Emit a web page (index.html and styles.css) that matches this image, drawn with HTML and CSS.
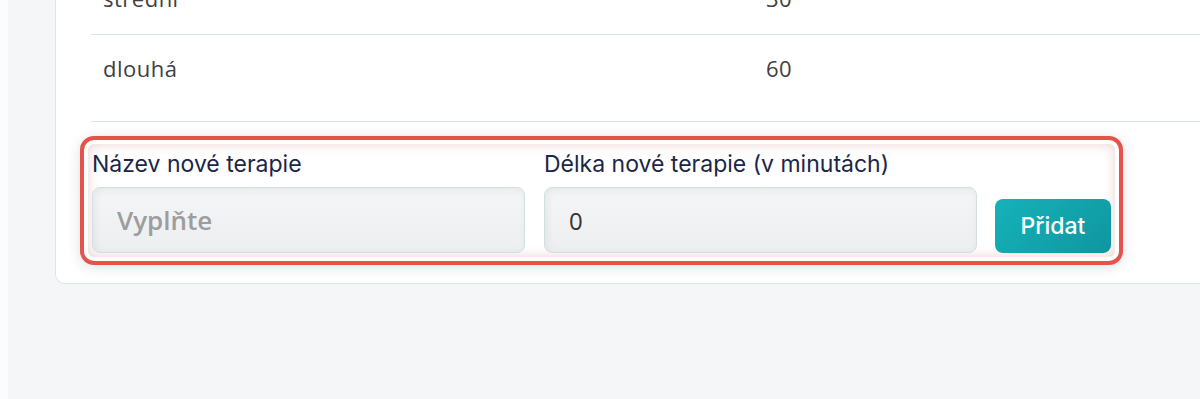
FILE: index.html
```html
<!DOCTYPE html>
<html lang="cs">
<head>
  <meta charset="UTF-8">
  <meta name="viewport" content="width=device-width, initial-scale=1.0">
  <link rel="stylesheet" href="styles.css">
</head>
<body>

  <div class="layout">
    <div class="sidebar-edge"></div>

    <main class="content">
      <div class="card">
        <table class="therapy-table">
          <tbody>
            <tr class="row-first">
              <td class="col-name">střední</td>
              <td>30</td>
            </tr>
            <tr>
              <td class="col-name">dlouhá</td>
              <td>60</td>
            </tr>
          </tbody>
        </table>

        <div class="highlight">
          <form class="new-therapy" onsubmit="return false">
            <div class="field">
              <label for="therapyName">Název nové terapie</label>
              <input id="therapyName" type="text" placeholder="Vyplňte">
            </div>
            <div class="field">
              <label for="therapyLength">Délka nové terapie (v minutách)</label>
              <input id="therapyLength" type="text" value="0">
            </div>
            <button class="btn-add" type="submit">Přidat</button>
          </form>
        </div>
      </div>
    </main>
  </div>

</body>
</html>
```

FILE: styles.css
```css
* {
  box-sizing: border-box;
}

body {
  margin: 0;
  background-color: #f4f6f8;
  font-family: 'Open Sans', 'Noto Sans', sans-serif;
  overflow: hidden;
  height: 399px;
}

.layout {
  display: flex;
  height: 100%;
}

.sidebar-edge {
  width: 8px;
  flex-shrink: 0;
  background-color: #fbfcfc;
}

.content {
  flex: 1;
  padding-left: 47px;
}

.card {
  width: 1200px;
  margin-top: -23px;
  padding: 7px 0 18px 35px;
  background-color: #fff;
  border: 1px solid #dde7e8;
  border-radius: 10px;
}

.therapy-table {
  width: 100%;
  border-collapse: collapse;
  color: #404040;
  font-size: 22px;
  line-height: 26px;
  letter-spacing: 0.5px;
}

.therapy-table td {
  padding: 20px 12px 40px;
  border-bottom: 1px solid #d9e5e8;
  vertical-align: top;
}

/* the first row is cut by the top of the window */
.therapy-table .row-first td {
  padding-top: 0;
  padding-bottom: 23px;
}

.therapy-table .col-name {
  width: 663px;
}

/* red annotation frame around the form row */
.highlight {
  margin: 14px 0 0 -11px;
  width: 1043px;
  padding: 4px;
  border: 4px solid #e5534b;
  border-radius: 14px;
  background-color: #fff;
  box-shadow: 0 2px 14px rgba(0, 0, 0, 0.12);
}

.new-therapy {
  display: flex;
  align-items: flex-end;
  gap: 18px;
  padding: 6px 4px 4px 4px;
  border-radius: 6px;
  box-shadow: inset 0 0 12px rgba(190, 110, 110, 0.32);
}

.field {
  flex: 1;
  display: flex;
  flex-direction: column;
  gap: 9px;
}

.field + .field {
  margin-left: 1px;
}

.field label {
  font-family: 'Inter', 'Lato', sans-serif;
  font-size: 23px;
  line-height: 28px;
  color: #1c2647;
}

.field input {
  height: 66px;
  padding: 0 24px;
  border: 1px solid #d2dfe0;
  border-radius: 8px;
  background: linear-gradient(#f4f5f6, #eceeef);
  box-shadow: inset 2px 2px 8px rgba(0, 0, 0, 0.06);
  font-family: 'Open Sans', sans-serif;
  font-size: 24px;
  color: #333;
  outline: none;
}

.field input::placeholder {
  color: #9d9d9d;
  font-size: 26px;
  font-weight: 600;
}

.btn-add {
  width: 116px;
  height: 54px;
  border: none;
  border-radius: 8px;
  background: linear-gradient(135deg, #16b2ba, #0f969f);
  color: #fff;
  font-family: 'Inter', sans-serif;
  font-size: 23px;
  font-weight: 500;
  cursor: pointer;
}
```
